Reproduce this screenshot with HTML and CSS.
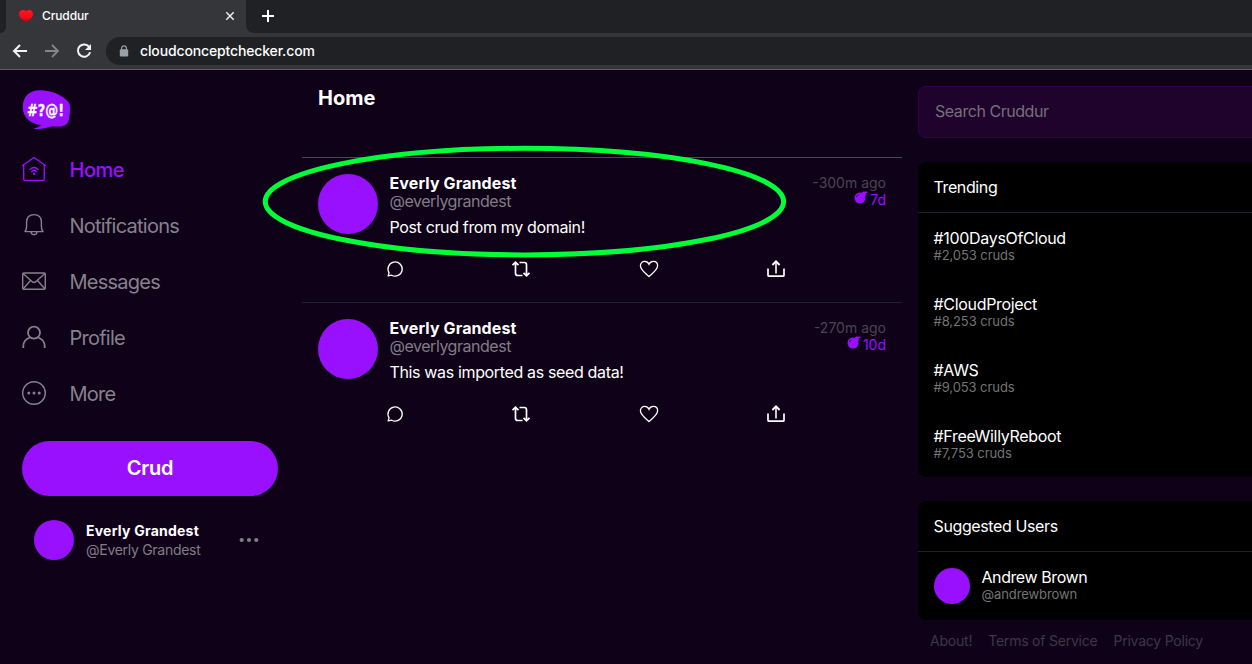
FILE: index.html
```html
<!DOCTYPE html>
<html lang="en">
<head>
<meta charset="utf-8">
<title>Cruddur</title>
<link rel="stylesheet" href="styles.css">
</head>
<body>
<svg class="defs" width="0" height="0">
  <symbol id="reply" viewBox="0 0 18 18"><path d="M2.1 15.9 L3.1 12.8 A7.1 7.1 0 1 1 5.6 15.2 Z" fill="none" stroke="#fff" stroke-width="1.3" stroke-linejoin="round"/></symbol>
  <symbol id="repost" viewBox="0 0 20 18"><path d="M1.5 5.2 4.5 2.2 7.5 5.2 M4.5 2.5 V13.2 Q4.5 15.5 6.8 15.5 H11.5 M8.5 2.5 H13.2 Q15.5 2.5 15.5 4.8 V15.5 M12.5 12.8 15.5 15.8 18.5 12.8" fill="none" stroke="#fff" stroke-width="1.7"/></symbol>
  <symbol id="heart" viewBox="0 0 20 18"><path d="M10 16.5 C8 14.6 1.4 10 1.4 5.8 C1.4 3.1 3.3 1.4 5.6 1.4 C7.6 1.4 9.2 2.5 10 4.3 C10.8 2.5 12.4 1.4 14.4 1.4 C16.7 1.4 18.6 3.1 18.6 5.8 C18.6 10 12 14.6 10 16.5Z" fill="none" stroke="#fff" stroke-width="1.3"/></symbol>
  <symbol id="share" viewBox="0 0 20 18"><path d="M2 8.5 V15.2 Q2 16.2 3 16.2 H17 Q18 16.2 18 15.2 V8.5" fill="none" stroke="#fff" stroke-width="1.7"/><path d="M10 13.5 V2" stroke="#d5d2d8" stroke-width="1.9"/><path d="M6.4 5 10 1.4 13.6 5" fill="none" stroke="#fff" stroke-width="1.9"/></symbol>
  <symbol id="bomb" viewBox="0 0 14 13"><circle cx="6" cy="7" r="5.5" fill="#9910fe"/><path d="M7.5 1.5 9.7.5 13.7.7 13.2 2 11.4 2.2 12.3 3.8 10.5 5.5Z" fill="#9910fe"/><path d="M2.5 6.2 Q2.8 4.2 4.6 3.5" fill="none" stroke="#350064" stroke-width="1"/></symbol>
</svg>

<header class="browser">
  <div class="tabs">
    <div class="tab-edge"></div>
    <div class="tab">
      <svg class="tab-heart" width="16" height="14" viewBox="0 0 16 14"><defs><linearGradient id="red" x2="0" y2="1"><stop stop-color="#ff1822"/><stop offset=".65" stop-color="#f90418"/><stop offset="1" stop-color="#b80012"/></linearGradient></defs><path d="M8 13 C5.5 11.8 1 9 1 5 C1 1 5.8-.2 8 2.6 C10.2-.2 15 1 15 5 C15 9 10.5 11.8 8 13Z" fill="url(#red)"/></svg>
      <span class="tab-title">Cruddur</span>
      <svg width="10" height="10" viewBox="0 0 10 10"><path d="M1.3 1.3 8.7 8.7 M8.7 1.3 1.3 8.7" stroke="#eee" stroke-width="1.5"/></svg>
    </div>
    <div class="tab-strip"><svg width="14" height="14" viewBox="0 0 14 14"><path d="M7 1V13M1 7H13" stroke="#fff" stroke-width="2"/></svg></div>
  </div>
  <div class="toolbar">
    <svg width="16" height="16" viewBox="0 0 16 16"><path d="M15 8H2.5M8 2 2 8 8 14" fill="none" stroke="#f2f3f4" stroke-width="2"/></svg>
    <svg width="16" height="16" viewBox="0 0 16 16"><path d="M1 8H13.5M8 2 14 8 8 14" fill="none" stroke="#85868a" stroke-width="1.8"/></svg>
    <svg width="16" height="16" viewBox="0 0 16 16"><path d="M13.4 4.3 A6.2 6.2 0 1 0 14.1 9.3" fill="none" stroke="#f2f3f4" stroke-width="2"/><path d="M15 1V7H9Z" fill="#f2f3f4"/></svg>
    <div class="address">
      <svg width="10" height="12" viewBox="0 0 10 12"><rect x=".8" y="4.2" width="8.4" height="7.3" rx="1" fill="#9aa0a6"/><path d="M2.6 5V3.2A2.4 2.4 0 0 1 7.4 3.2V5" fill="none" stroke="#9aa0a6" stroke-width="1.2"/></svg>
      <span>cloudconceptchecker.com</span>
    </div>
  </div>
</header>

<main class="app">
  <nav class="sidebar">
    <svg class="logo" width="50" height="42" viewBox="0 0 50 42"><path d="M.8 18 C.8 7 8 1.2 18 1.2 C30 1.2 41 6.5 46.5 13 C49 16 48 23 47.3 29 C46.5 35 43 37.5 37 37.5 H30 C26 38 23 40 13.5 40 C12 40 11.7 39.2 13 39 C16 38.5 18.5 37 19.2 36 C9 35 .8 29 .8 18Z" fill="#9910fe"/><text class="logo-text" x="5" y="26.5" textLength="37" lengthAdjust="spacingAndGlyphs">#?@!</text></svg>
    <a class="nav-item active"><svg width="26" height="26" viewBox="0 0 26 26"><g fill="none" stroke="#9910fe" stroke-width="1.3" stroke-linecap="round" stroke-linejoin="round"><path d="M1.5 9.5 13 1.5 24.5 9.5M2.7 9V23.2Q2.7 24.3 3.8 24.3H22.2Q23.3 24.3 23.3 23.2V9"/><path d="M9 13.4Q13 9.7 17 13.4M10.7 15.5Q13 13.4 15.3 15.5"/></g><circle cx="13" cy="17.8" r="1.2" fill="#9910fe"/></svg><span>Home</span></a>
    <a class="nav-item"><svg width="26" height="26" viewBox="0 0 26 26"><path d="M4 19.6C5.2 18.4 5.6 17 5.6 14.5V10C5.6 5.5 8.5 2.6 13 2.6S20.4 5.5 20.4 10V14.5C20.4 17 20.8 18.4 22 19.6ZM10 20Q10.3 22.7 13 22.7T16 20" fill="none" stroke="#86818c" stroke-width="1.4" stroke-linejoin="round"/></svg><span>Notifications</span></a>
    <a class="nav-item"><svg width="26" height="26" viewBox="0 0 26 26"><g fill="none" stroke="#86818c" stroke-width="1.4"><rect x="1.7" y="5" width="22.6" height="16.2" rx="1.2"/><path d="M2 5.5 11 13.6Q13 15.5 15 13.6L24 5.5M2 21 9.5 12.5M24 21 16.5 12.5"/></g></svg><span>Messages</span></a>
    <a class="nav-item"><svg width="26" height="26" viewBox="0 0 26 26"><g fill="none" stroke="#86818c" stroke-width="1.8"><circle cx="13" cy="8.7" r="6"/><path d="M2.3 24V22.5Q2.3 15.5 9 13.5M17 13.5Q23.7 15.5 23.7 22.5V24"/></g></svg><span>Profile</span></a>
    <a class="nav-item"><svg width="26" height="26" viewBox="0 0 26 26"><circle cx="13" cy="13" r="11.3" fill="none" stroke="#86818c" stroke-width="1.4"/><g fill="#86818c"><circle cx="7.8" cy="13" r="1.5"/><circle cx="13" cy="13" r="1.5"/><circle cx="18.2" cy="13" r="1.5"/></g></svg><span>More</span></a>
    <button class="crud">Crud</button>
    <div class="profile">
      <div class="avatar small"></div>
      <div class="profile-text"><strong>Everly Grandest</strong><span>@Everly Grandest</span></div>
      <svg width="20" height="6" viewBox="0 0 20 6"><g fill="#817c87"><circle cx="2.7" cy="3" r="2.1"/><circle cx="10" cy="3" r="2.1"/><circle cx="17.3" cy="3" r="2.1"/></g></svg>
    </div>
  </nav>

  <section class="feed">
    <h1>Home</h1>
    <article class="post first">
      <div class="post-head">
        <div class="avatar large"></div>
        <div class="post-body"><strong>Everly Grandest</strong><span class="handle">@everlygrandest</span><p>Post crud from my domain!</p></div>
        <div class="times"><span>-300m ago</span><b><svg width="14" height="13"><use href="#bomb"/></svg>7d</b></div>
      </div>
      <div class="actions"><svg width="18" height="18"><use href="#reply"/></svg><svg width="20" height="18"><use href="#repost"/></svg><svg width="20" height="18"><use href="#heart"/></svg><svg width="20" height="18"><use href="#share"/></svg></div>
    </article>
    <article class="post">
      <div class="post-head">
        <div class="avatar large"></div>
        <div class="post-body"><strong>Everly Grandest</strong><span class="handle">@everlygrandest</span><p>This was imported as seed data!</p></div>
        <div class="times"><span>-270m ago</span><b><svg width="14" height="13"><use href="#bomb"/></svg>10d</b></div>
      </div>
      <div class="actions"><svg width="18" height="18"><use href="#reply"/></svg><svg width="20" height="18"><use href="#repost"/></svg><svg width="20" height="18"><use href="#heart"/></svg><svg width="20" height="18"><use href="#share"/></svg></div>
    </article>
  </section>

  <aside class="right">
    <input class="search" placeholder="Search Cruddur">
    <div class="card">
      <h2>Trending</h2>
      <div class="trend"><span>#100DaysOfCloud</span><small>#2,053 cruds</small></div>
      <div class="trend"><span>#CloudProject</span><small>#8,253 cruds</small></div>
      <div class="trend"><span>#AWS</span><small>#9,053 cruds</small></div>
      <div class="trend"><span>#FreeWillyReboot</span><small>#7,753 cruds</small></div>
    </div>
    <div class="card">
      <h2>Suggested Users</h2>
      <div class="user"><div class="avatar tiny"></div><div class="user-text"><span>Andrew Brown</span><small>@andrewbrown</small></div></div>
    </div>
    <footer><a>About!</a><a>Terms of Service</a><a>Privacy Policy</a></footer>
  </aside>
</main>
<svg class="annotation" width="526" height="114" viewBox="0 0 526 114"><ellipse cx="263.4" cy="56.6" rx="259.2" ry="53.3" fill="none" stroke="#00ff38" stroke-width="5"/></svg>
</body>
</html>
```
FILE: styles.css
```css
* { box-sizing: border-box; }
body { margin: 0; width: 1252px; height: 664px; overflow: hidden; background: #0f0218; color: #fff; font-family: Inter, "Liberation Sans", sans-serif; }
svg { display: block; flex: none; }
.defs { position: absolute; }
.browser { height: 70px; background: #35363a; border-bottom: 1px solid #5d5e62; }
.tabs { display: flex; height: 33px; }
.tab-edge { width: 6px; background: #202124; border-bottom-right-radius: 6px; }
.tab { width: 240px; display: flex; align-items: center; padding: 0 11px 1px 12px; }
.tab-title { flex: 1; margin-left: 8px; padding-bottom: 1px; font-size: 12px; font-weight: 500; letter-spacing: -.1px; }
.tab-strip { flex: 1; background: #202124; border-bottom-left-radius: 8px; padding: 9px 0 0 15px; }
.toolbar { height: 36px; display: flex; align-items: center; gap: 16px; padding-left: 12px; }
.address { flex: 1; height: 28px; margin-left: -2px; border-radius: 14px 0 0 14px; background: #202124; display: flex; align-items: center; gap: 11px; padding-left: 13px; font-size: 14px; font-weight: 500; letter-spacing: -.14px; }
.address span { padding-bottom: 1px; }
.app { display: flex; height: 594px; }
.sidebar { width: 302px; flex: none; padding: 19px 24px 0 22px; }
.logo { margin-bottom: 10px; }
.logo-text { font: bold 16px "DejaVu Sans", sans-serif; fill: #fff; stroke: #fff; stroke-width: .3px; }
.nav-item { height: 56px; display: flex; align-items: center; gap: 22.5px; margin-left: -1px; padding-bottom: 1px; color: #86818c; font-size: 20px; letter-spacing: -.75px; }
.active { color: #9910fe; font-weight: 500; letter-spacing: -.5px; }
.nav-item span { padding-top: 2px; }
.crud { display: block; width: 256px; height: 55px; margin-top: 20px; padding: 0 0 2px; border: 0; border-radius: 28px; background: #9910fe; color: #fff; font: 600 20px Inter, sans-serif; letter-spacing: -.2px; }
.avatar { background: #9910fe; border-radius: 50%; flex: none; }
.small { width: 40px; height: 40px; }
.large { width: 60px; height: 60px; }
.tiny { width: 36px; height: 36px; }
.profile { display: flex; align-items: center; gap: 12px; padding: 24px 19px 0 12px; }
.profile-text { flex: 1; display: flex; flex-direction: column; gap: 2px; font-size: 14px; line-height: 17px; white-space: nowrap; }
.profile-text strong { letter-spacing: .23px; }
.profile-text span { color: #817c87; letter-spacing: -.28px; }
.feed { width: 600px; flex: none; }
h1 { margin: 0; height: 87px; padding: 16px; font-size: 20px; line-height: 24px; font-weight: 700; }
.post { height: 145px; border-top: 1px solid #1c2230; padding: 16px; }
.first { border-color: #4b4855; }
.post-head { display: flex; gap: 11.5px; height: 86px; }
.post-body { flex: 1; font-size: 16px; line-height: 18px; }
.post-body strong, .handle { display: block; }
.post-body strong { letter-spacing: .12px; }
.handle { color: #817c87; letter-spacing: -.47px; }
.post-body p { margin: 8px 0 0; letter-spacing: -.35px; }
.times { font-size: 14px; line-height: 17px; text-align: right; color: #484552; }
.times span { display: block; }
.times b { display: flex; justify-content: flex-end; gap: 2px; color: #9910fe; font-weight: 400; }
.actions { display: flex; justify-content: space-between; padding: 0 100px 0 68px; }
.right { flex: none; width: 350px; padding: 16px 0 0 16px; }
.search { display: block; width: 360px; height: 52px; padding: 0 16px 2px; border: 1px solid #2b0550; border-radius: 8px; background: #1f032d; font: 16px Inter, sans-serif; letter-spacing: -.45px; }
.search::placeholder { color: #757078; }
.card { margin-top: 24px; width: 360px; border-radius: 8px; background: #000; }
h2 { margin: 0; height: 51px; padding: 16px 15.5px; border-bottom: 1px solid #202028; font-size: 16px; line-height: 19px; font-weight: 400; letter-spacing: -.38px; }
.trend { height: 66px; padding: 16px 15.5px; }
.trend span, .user span { display: block; font-size: 16px; line-height: 19px; letter-spacing: -.32px; }
.trend small, .user small { display: block; color: #747474; font-size: 13px; line-height: 15px; letter-spacing: -.08px; }
.user { height: 68px; padding: 16px; display: flex; gap: 11.5px; }
.user span { letter-spacing: -.42px; }
footer { display: flex; gap: 16px; padding: 12px; font-size: 14px; line-height: 17px; letter-spacing: -.22px; color: #3f3547; }
.annotation { position: absolute; left: 261px; top: 145px; }
```
